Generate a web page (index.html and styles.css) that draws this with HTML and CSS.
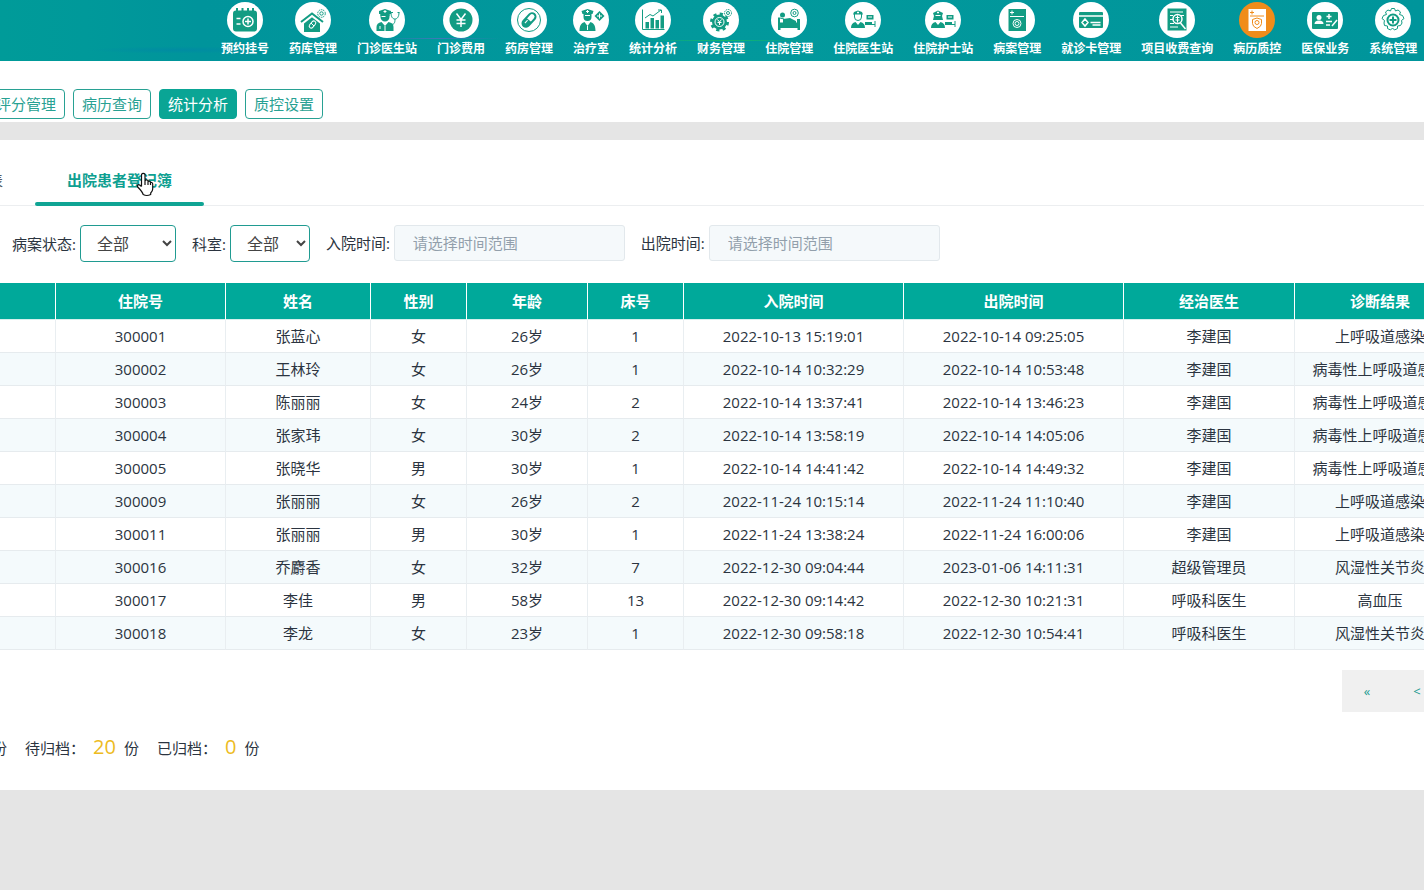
FILE: index.html
```html
<!DOCTYPE html>
<html lang="zh-CN">
<head>
<meta charset="utf-8">
<title>出院患者登记簿</title>
<link rel="stylesheet" href="styles.css">
</head>
<body>
<header class="topbar">
<nav class="modules" aria-label="系统模块">
<a class="module" href="#"><svg class="badge" viewBox="0 0 36 36"><circle class="disc" cx="18" cy="18" r="18"/><rect class="f" x="6" y="8.500" width="24" height="21" rx="3"/><path class="s2" d="M10 6v4M15.500 6v4M21 6v4M26 6v4"/><path class="w2" d="M9.500 16.500h4M9.500 22h4"/><circle class="w2" cx="21" cy="19.500" r="5"/><path class="w2" d="M21 16.500v6M18 19.500h6"/></svg><span>预约挂号</span></a>
<a class="module" href="#"><svg class="badge" viewBox="0 0 36 36"><circle class="disc" cx="18" cy="18" r="18"/><path class="s2" d="M6 20 17 11.500 28 20"/><path class="f" d="M9 21.500 17 15.200l8 6.300V30H9z"/><rect class="w" x="13.500" y="20.500" width="8" height="4" rx="2" transform="rotate(-50 17.500 22.500)"/><path class="w" d="m16 21 3 3"/><circle class="s" cx="26.500" cy="11.500" r="3.800" stroke-dasharray="1.600 .8"/><circle class="s" cx="26.500" cy="11.500" r="1.700"/></svg><span>药库管理</span></a>
<a class="module" href="#"><svg class="badge" viewBox="0 0 36 36"><circle class="disc" cx="18" cy="18" r="18"/><path class="f" d="M10 12V9l6-2 6 2v3z"/><path class="f" d="M11.500 12v3a4.500 4.500 0 0 0 9 0v-3"/><path class="f" d="M11.500 12h9v2h-9zM7.500 29v-4q0-4 5-5l3.500 4 3.500-4q5 1 5 5v4z"/><path class="w" d="M16 8v3M14.500 9.500h3M12.500 14.500h4M16 24v5M11 24v3"/><path class="s" d="M22 10.500c0 5 2 6.500 4 6.500s4-2 4-6.500M22 10.500h2M28.500 10.500h2M26 17c0 4-1 6-4 5"/></svg><span>门诊医生站</span></a>
<a class="module" href="#"><svg class="badge" viewBox="0 0 36 36"><circle class="disc" cx="18" cy="18" r="18"/><circle class="f" cx="18" cy="18" r="11.500"/><path class="w2" d="m13.500 11.500 4.500 6 4.500-6M18 17.500v7.500M13.500 18h9M13.500 21.500h9"/></svg><span>门诊费用</span></a>
<a class="module" href="#"><svg class="badge" viewBox="0 0 36 36"><circle class="disc" cx="18" cy="18" r="18"/><circle class="s" cx="18" cy="18" r="11.500"/><g transform="rotate(-48 18 18)"><rect class="s2" x="10" y="14.500" width="16" height="7" rx="3.500"/><path class="f" d="M13.500 14.500H18v7h-4.500a3.500 3.500 0 0 1 0-7z"/><path class="w" d="M13 17h4"/></g></svg><span>药房管理</span></a>
<a class="module" href="#"><svg class="badge" viewBox="0 0 36 36"><circle class="disc" cx="18" cy="18" r="18"/><path class="f" d="m8.500 9 6-2 6 2-1 3h-10zM10.500 12h8v3a4 4 0 0 1-8 0zM6.500 29c0-6 2-8 5-9l3 4 3-4c3 1 5 3 5 9z"/><path class="w" d="M14.500 8v3M13 9.500h3M12 13.500h5M14.500 24v4"/><path class="f" d="m26.500 9 5 5-5 5-5-5z"/><path class="w" d="M26.500 11.500v5M24 14h5"/></svg><span>治疗室</span></a>
<a class="module" href="#"><svg class="badge" viewBox="0 0 36 36"><circle class="disc" cx="18" cy="18" r="18"/><path class="s" d="M7.500 7.500v20h22M10 16l5-3.500 3 1.500 8-6M23 8h3.500v3"/><path class="f" d="M10.500 20H14v6.500h-3.500zM15.500 16H19v10.500h-3.500zM20.500 18H24v8.500h-3.500zM25.500 13.500H29v13h-3.500z"/></svg><span>统计分析</span></a>
<a class="module" href="#"><svg class="badge" viewBox="0 0 36 36"><circle class="disc" cx="18" cy="18" r="18"/><circle class="f" cx="16.500" cy="20" r="7.500"/><circle cx="16.500" cy="20" r="8" fill="none" stroke="#129c83" stroke-width="3" stroke-dasharray="3.140 3.140"/><circle class="w" cx="16.500" cy="20" r="4.500"/><path class="w" d="m14.500 17.500 2 2.500 2-2.500M16.500 20v3M14.500 20.500h4"/><circle class="s" cx="25" cy="11" r="3.500" stroke-dasharray="1.500 .8"/><circle class="s" cx="25" cy="11" r="1.500"/></svg><span>财务管理</span></a>
<a class="module" href="#"><svg class="badge" viewBox="0 0 36 36"><circle class="disc" cx="18" cy="18" r="18"/><circle class="f" cx="11.500" cy="13" r="2.500"/><path class="f" d="M7 15.500h2v5h17V17h3v11h-2.500v-2h-17v2H7zM12 17l7-1 6 3v2H12z"/><path class="s" d="m9 16 4 1 2 3"/><circle class="s" cx="23.500" cy="11" r="3.800"/><circle class="s" cx="23.500" cy="11" r="1.500"/></svg><span>住院管理</span></a>
<a class="module" href="#"><svg class="badge" viewBox="0 0 36 36"><circle class="disc" cx="18" cy="18" r="18"/><path class="f" d="m8 12.500 1-2.500 4-1.500 4 1.500 1 2.500zM6 26q0-5 4.500-6l2.500 3 2.500-3q4.500 1 4.500 6z"/><path class="s" d="M9.500 12v3a3.500 3.500 0 0 0 7 0v-3M20 22.500h10M30 19v6"/><path class="f" d="M21.500 13h7v4.500h-7zM20 20h7v2.500h-7z"/><path class="w" d="M13 9.500v2M12 10.500h2M23 15h4"/></svg><span>住院医生站</span></a>
<a class="module" href="#"><svg class="badge" viewBox="0 0 36 36"><circle class="disc" cx="18" cy="18" r="18"/><path class="f" d="m8 11 5-2.500L18 11l-1 3 1 4H8l1-4zM6 26q0-5 4.500-6l2.500 3 2.500-3q4.500 1 4.500 6z"/><path class="s" d="M20 22.500h10M30 19v6"/><path class="f" d="M21.500 13h7v4.500h-7zM20 20h7v2.500h-7z"/><path class="w" d="M13 9.500v2M12 10.500h2M23 15h4M10.500 13.500h5"/></svg><span>住院护士站</span></a>
<a class="module" href="#"><svg class="badge" viewBox="0 0 36 36"><circle class="disc" cx="18" cy="18" r="18"/><path class="f" d="M9.500 7h17.500v22H9.500z"/><path class="w" d="M13 8.500v4M11 10.500h4M11 14.500h14"/><circle class="w" cx="18" cy="21.500" r="4"/><circle class="w" cx="18" cy="21.500" r="2"/></svg><span>病案管理</span></a>
<a class="module" href="#"><svg class="badge" viewBox="0 0 36 36"><circle class="disc" cx="18" cy="18" r="18"/><rect class="f" x="6" y="10" width="24" height="16" rx="1"/><path class="w2" d="M6 14h24M17.500 20.500h10M19.500 23h8M12 17l3 3.500-3 3.500-3-3.500z"/></svg><span>就诊卡管理</span></a>
<a class="module" href="#"><svg class="badge" viewBox="0 0 36 36"><circle class="disc" cx="18" cy="18" r="18"/><path class="f" d="M8.500 6.500h19v22h-19z"/><path class="w" d="M11 10h13M11 13.500h3M22 13.500h3M11 17.500h3M11 21.500h4M11 25h8"/><circle class="w2" cx="18.500" cy="17" r="4.500"/><path class="w" d="M16.500 15.500h4M18.500 13.500v7M16.500 18h4"/><path class="w2" d="m21.500 21 5 6"/></svg><span>项目收费查询</span></a>
<a class="module current" href="#" aria-current="page"><svg class="badge" viewBox="0 0 36 36"><circle class="disc" cx="18" cy="18" r="18"/><path class="f" d="M9.500 7h17.500v22H9.500z"/><path class="w" d="M13 8.500v4M11 10.500h4M11 14h14M18 16l4.500 1.500v4q0 3-4.500 5-4.500-2-4.500-5v-4z"/><circle class="w" cx="18" cy="20.500" r="2"/></svg><span>病历质控</span></a>
<a class="module" href="#"><svg class="badge" viewBox="0 0 36 36"><circle class="disc" cx="18" cy="18" r="18"/><rect class="f" x="5" y="10" width="26" height="17" rx="1"/><circle cx="12" cy="15.500" r="2.500" fill="#fff"/><path d="M7.500 22q0-3.500 4.500-3.500t4.500 3.500z" fill="#fff"/><path class="w2" d="M22 12v5M19.500 14.500h5M19 19.500h6M19 23h4M30 18l-5 6"/></svg><span>医保业务</span></a>
<a class="module" href="#"><svg class="badge" viewBox="0 0 36 36"><circle class="disc" cx="18" cy="18" r="18"/><path class="s" d="m15.500 9 1-2.500h3l1 2.500 2.500-1 2.500 2-1 2.500 3 1 1.500 3-2.500 2 .5 2.500-1.500 2.500-3 .5v2.500l-3 1.500-2-2-2 2-3-1.500V24l-3-.5L9 21l.5-2.500-2.500-2 1.500-3 3-1-1-2.500L13 8z"/><circle class="s2" cx="18" cy="18" r="5.500"/><path class="s2" d="M18 14.500v7M14.500 18h7"/></svg><span>系统管理</span></a>
</nav>
</header>
<nav class="pages" aria-label="质控功能">
<button type="button" class="page-btn">评分管理</button>
<button type="button" class="page-btn">病历查询</button>
<button type="button" class="page-btn active">统计分析</button>
<button type="button" class="page-btn">质控设置</button>
</nav>
<main class="panel">
<div class="tabs" role="tablist">
<button type="button" class="tab" role="tab" aria-selected="false">表</button>
<button type="button" class="tab active" role="tab" aria-selected="true">出院患者登记簿<svg class="pointer" viewBox="0 0 18 26" aria-hidden="true"><path d="M5.500 15.500V3.500a2 2 0 0 1 3.500 0V10q.500-1.500 2-1t1 1.500q2-1 2.500 1 2-.5 2.200 1.500v5q0 2-2 4v1.500q-4 2-7.500 0-1-3-5.500-7.500-1-2 .8-2.300 1.200 0 3 1.800M9 10v4M12 10.500V14M14.500 11.500V14"/></svg></button>
</div>
<form class="filters">
<div class="field"><label for="status">病案状态:</label><select id="status" class="select wide"><option>全部</option></select></div>
<div class="field"><label for="dept">科室:</label><select id="dept" class="select"><option>全部</option></select></div>
<div class="field"><label for="admit">入院时间:</label><input id="admit" class="range" type="text" placeholder="请选择时间范围"></div>
<div class="field"><label for="leave">出院时间:</label><input id="leave" class="range" type="text" placeholder="请选择时间范围"></div>
</form>
<div class="table-wrap">
<table class="register">
<colgroup><col class="c-index"><col class="c-id"><col class="c-name"><col class="c-short"><col class="c-age"><col class="c-short"><col class="c-time"><col class="c-time"><col class="c-doctor"><col class="c-doctor"></colgroup>
<thead><tr><th></th><th>住院号</th><th>姓名</th><th>性别</th><th>年龄</th><th>床号</th><th>入院时间</th><th>出院时间</th><th>经治医生</th><th>诊断结果</th></tr></thead>
<tbody>
<tr><td></td><td>300001</td><td>张蓝心</td><td>女</td><td>26岁</td><td>1</td><td>2022-10-13 15:19:01</td><td>2022-10-14 09:25:05</td><td>李建国</td><td>上呼吸道感染</td></tr>
<tr><td></td><td>300002</td><td>王林玲</td><td>女</td><td>26岁</td><td>1</td><td>2022-10-14 10:32:29</td><td>2022-10-14 10:53:48</td><td>李建国</td><td>病毒性上呼吸道感染</td></tr>
<tr><td></td><td>300003</td><td>陈丽丽</td><td>女</td><td>24岁</td><td>2</td><td>2022-10-14 13:37:41</td><td>2022-10-14 13:46:23</td><td>李建国</td><td>病毒性上呼吸道感染</td></tr>
<tr><td></td><td>300004</td><td>张家玮</td><td>女</td><td>30岁</td><td>2</td><td>2022-10-14 13:58:19</td><td>2022-10-14 14:05:06</td><td>李建国</td><td>病毒性上呼吸道感染</td></tr>
<tr><td></td><td>300005</td><td>张晓华</td><td>男</td><td>30岁</td><td>1</td><td>2022-10-14 14:41:42</td><td>2022-10-14 14:49:32</td><td>李建国</td><td>病毒性上呼吸道感染</td></tr>
<tr><td></td><td>300009</td><td>张丽丽</td><td>女</td><td>26岁</td><td>2</td><td>2022-11-24 10:15:14</td><td>2022-11-24 11:10:40</td><td>李建国</td><td>上呼吸道感染</td></tr>
<tr><td></td><td>300011</td><td>张丽丽</td><td>男</td><td>30岁</td><td>1</td><td>2022-11-24 13:38:24</td><td>2022-11-24 16:00:06</td><td>李建国</td><td>上呼吸道感染</td></tr>
<tr><td></td><td>300016</td><td>乔麝香</td><td>女</td><td>32岁</td><td>7</td><td>2022-12-30 09:04:44</td><td>2023-01-06 14:11:31</td><td>超级管理员</td><td>风湿性关节炎</td></tr>
<tr><td></td><td>300017</td><td>李佳</td><td>男</td><td>58岁</td><td>13</td><td>2022-12-30 09:14:42</td><td>2022-12-30 10:21:31</td><td>呼吸科医生</td><td>高血压</td></tr>
<tr><td></td><td>300018</td><td>李龙</td><td>女</td><td>23岁</td><td>1</td><td>2022-12-30 09:58:18</td><td>2022-12-30 10:54:41</td><td>呼吸科医生</td><td>风湿性关节炎</td></tr>
</tbody>
</table>
</div>
<nav class="pager" aria-label="分页"><button type="button">«</button><button type="button">&lt;</button></nav>
<div class="summary"><span>份</span><p>待归档：<strong>20</strong>份</p><p>已归档：<strong>0</strong>份</p></div>
</main>
</body>
</html>
```
FILE: styles.css
```css
* { box-sizing: border-box; }
body {
  margin: 0;
  background: #e5e5e5;
  color: #2b3440;
  font: 15px/20px "Open Sans", "Noto Sans CJK SC", sans-serif;
  overflow: hidden;
}
button, input, select { font: inherit; margin: 0; }
button { cursor: pointer; white-space: nowrap; }

.topbar {
  overflow: hidden;
  background:
    linear-gradient(90deg, transparent, #3f78b8, transparent) 380px 38px / 120px 1px no-repeat,
    linear-gradient(90deg, transparent, #12b86c, transparent) 640px 40px / 170px 1px no-repeat,
    radial-gradient(ellipse at 180px 50px, #008ca2, transparent 90px),
    linear-gradient(90deg, #009b99, #00999a 6%, #00949b 14%, #02999c 50%, #00959b);
}
.modules { display: flex; padding: 2px 0 4px 211px; }
.module {
  display: flex;
  flex: none;
  flex-direction: column;
  align-items: center;
  gap: 1px;
  padding: 0 10px;
  color: #fff;
  font: bold 12px/18px "Noto Sans CJK SC", sans-serif;
  text-decoration: none;
  white-space: nowrap;
}
.badge { width: 36px; height: 36px; }
.disc { fill: #fff; }
.f { fill: #129c83; }
.s, .s2 { fill: none; stroke: #129c83; stroke-width: 1; }
.s2 { stroke-width: 2; }
.w, .w2 { fill: none; stroke: #fff; stroke-width: 1; }
.w2 { stroke-width: 1.5; }
.current .disc { fill: #f08c1a; }
.current .f { fill: #fff; }
.current .w { stroke: #f08c1a; }

.pages {
  display: flex;
  gap: 8px;
  margin-bottom: 18px;
  padding: 28px 0 3px;
  background: #fff;
}
.page-btn {
  height: 30px;
  padding: 0 8px;
  border: 1px solid #28a193;
  border-radius: 4px;
  background: #fff;
  color: #28a193;
}
.page-btn:first-child { margin-left: -13px; }
.page-btn.active { background: #0aa595; border-color: #0aa595; color: #fff; }

.panel { overflow: hidden; padding: 16px 0 28px; background: #fff; }
.tabs {
  display: flex;
  margin-left: -44px;
  border-bottom: 1px solid #eceef0;
}
.tab {
  position: relative;
  height: 50px;
  margin-bottom: -1px;
  padding: 2px 32px 0;
  border: 0;
  border-bottom: 4px solid transparent;
  background: none;
  color: #555d63;
}
.tab.active {
  color: #0fa091;
  font-weight: bold;
}
.tab.active::after {
  content: "";
  position: absolute;
  inset: auto 0 -4px;
  height: 4px;
  border-radius: 2px;
  background: #0fa494;
}
.pointer {
  position: absolute;
  left: 101px;
  top: 15px;
  width: 18px;
  height: 26px;
  fill: #fff;
  stroke: #111;
  stroke-width: 1.200;
  stroke-linejoin: round;
}

.filters { display: flex; align-items: flex-start; gap: 16px; padding: 19px 12px 21px; }
.field { display: flex; flex: none; align-items: center; gap: 4px; }
.select {
  width: 80px;
  height: 37px;
  padding: 0 0 0 12px;
  border: 1px solid #209b91;
  border-radius: 4px;
  background: #fff;
  color: #444;
  font-size: 16px;
}
.select.wide { width: 96px; }
.range {
  width: 231px;
  height: 36px;
  padding: 0 18px;
  border: 1px solid #e2e8ec;
  border-radius: 3px;
  background: #f5f9fb;
  color: #2b3440;
}
.range::placeholder { color: #929fab; opacity: 1; }

.table-wrap { overflow: hidden; }
.register {
  width: 1510px;
  margin-left: -44px;
  border-collapse: separate;
  border-spacing: 0;
  table-layout: fixed;
  text-align: center;
}
.c-index { width: 100px; }
.c-id { width: 170px; }
.c-name { width: 145px; }
.c-short { width: 96px; }
.c-age { width: 121px; }
.c-short { width: 96px; }
.c-time { width: 220px; }
.c-doctor { width: 171px; }
.register th {
  height: 37px;
  padding: 0;
  border-right: 1px solid #fff;
  border-bottom: 1px solid #d5f0ed;
  background: #00a99a;
  color: #fff;
}
.register td {
  height: 33px;
  padding: 0;
  border-right: 1px solid #e9eef1;
  border-bottom: 1px solid #e6ebee;
  white-space: nowrap;
}
.register tbody tr:nth-child(even) { background: #f4fafc; }

.pager { display: flex; justify-content: flex-end; margin: 20px -18px 0 0; }
.pager button {
  width: 50px;
  height: 42px;
  padding: 0;
  border: 0;
  background: #f0f0f0;
  color: #209b91;
  font-size: 13px;
}
.summary { display: flex; align-items: baseline; gap: 18px; margin: 21px 0 0 -8px; }
.summary p { margin: 0; line-height: 28px; }
.summary strong { margin: 0 8px; color: #edbb22; font-size: 20px; font-weight: normal; }
```
